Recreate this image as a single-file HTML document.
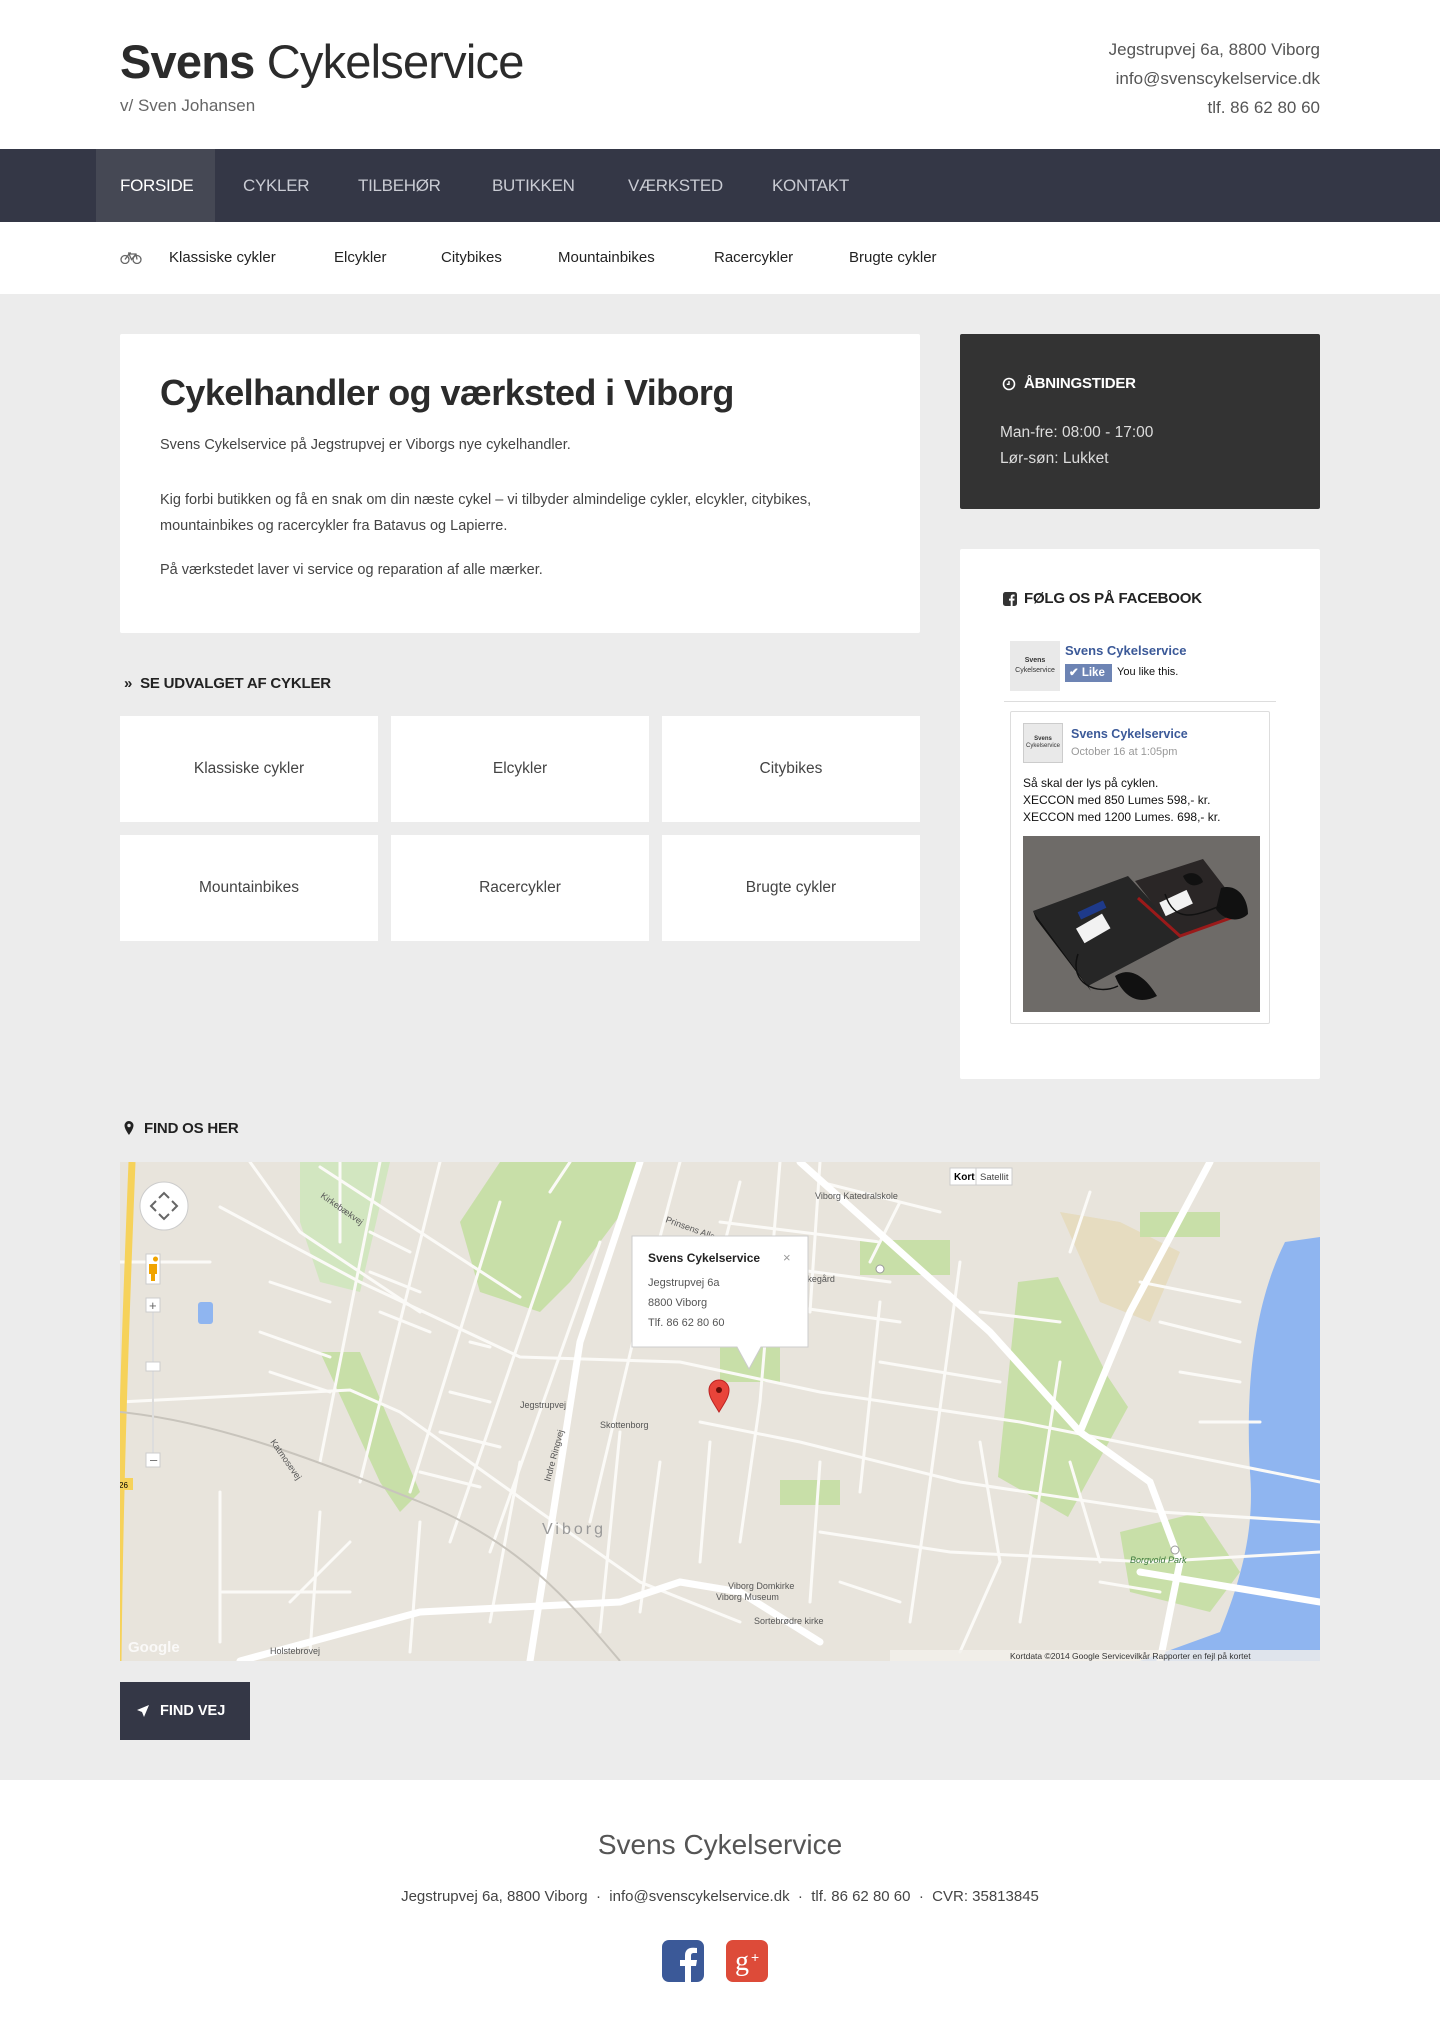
<!DOCTYPE html>
<html><head><meta charset="utf-8">
<style>
*{box-sizing:border-box;margin:0;padding:0}
body{width:1440px;height:2038px;background:#fff;font-family:"Liberation Sans",sans-serif;color:#333;position:relative;overflow:hidden}
.abs{position:absolute}
.nav{top:149px;left:0;width:1440px;height:73px;background:#343746}
.nav a{position:absolute;top:0;height:73px;line-height:73px;color:#c9cbd3;font-size:17px;letter-spacing:-0.3px}
.sub{top:222px;height:72px;width:1440px;background:#fff}
.sub span{position:absolute;top:27px;font-size:15px;color:#222}
.gray{top:294px;left:0;width:1440px;height:1486px;background:#ececec}
.card{background:#fff;border-radius:2px}
.tile{background:#fff;width:258px;height:106px;text-align:center;line-height:106px;font-size:15.5px;color:#444}
.h4{font-size:15px;font-weight:bold;color:#222;letter-spacing:-0.2px}
p.t{font-size:14.5px;color:#444;position:absolute;left:40px}
</style></head><body>

<div class="abs" style="left:120px;top:34px;font-size:47px;color:#2b2b2b;letter-spacing:-0.8px"><b>Svens</b> Cykelservice</div>
<div class="abs" style="left:120px;top:96px;font-size:17px;color:#666">v/ Sven Johansen</div>
<div class="abs" style="right:120px;top:35px;text-align:right;font-size:17px;color:#555;line-height:29px">Jegstrupvej 6a, 8800 Viborg<br>info@svenscykelservice.dk<br>tlf. 86 62 80 60</div>

<div class="abs nav">
<div class="abs" style="left:96px;top:0;width:119px;height:73px;background:#454854"></div>
<a style="left:120px;color:#fff">FORSIDE</a>
<a style="left:243px">CYKLER</a>
<a style="left:358px">TILBEHØR</a>
<a style="left:492px">BUTIKKEN</a>
<a style="left:628px">VÆRKSTED</a>
<a style="left:772px">KONTAKT</a>
</div>

<div class="abs sub">
<svg class="abs" style="left:120px;top:30px" width="22" height="12" viewBox="0 0 22 12"><g fill="none" stroke="#666" stroke-width="1.3"><circle cx="5" cy="7.5" r="4"/><circle cx="17" cy="7.5" r="4"/><path d="M5 7.5L9 2h7l1 5.5M9 2l2.5 5.5L16 2M8 1h3"/></g></svg>
<span style="left:169px">Klassiske cykler</span>
<span style="left:334px">Elcykler</span>
<span style="left:441px">Citybikes</span>
<span style="left:558px">Mountainbikes</span>
<span style="left:714px">Racercykler</span>
<span style="left:849px">Brugte cykler</span>
</div>

<div class="abs gray"></div>

<div class="abs card" style="left:120px;top:334px;width:800px;height:299px">
<div class="abs" style="left:40px;top:38px;font-size:36px;font-weight:bold;color:#2b2b2b;letter-spacing:-0.6px">Cykelhandler og værksted i Viborg</div>
<p class="t" style="top:103px">Svens Cykelservice på Jegstrupvej er Viborgs nye cykelhandler.</p>
<p class="t" style="top:153px;line-height:26px;width:740px">Kig forbi butikken og få en snak om din næste cykel – vi tilbyder almindelige cykler, elcykler, citybikes, mountainbikes og racercykler fra Batavus og Lapierre.</p>
<p class="t" style="top:228px">På værkstedet laver vi service og reparation af alle mærker.</p>
</div>

<div class="abs h4" style="left:124px;top:675px">»&nbsp; SE UDVALGET AF CYKLER</div>
<div class="abs tile" style="left:120px;top:716px">Klassiske cykler</div>
<div class="abs tile" style="left:391px;top:716px">Elcykler</div>
<div class="abs tile" style="left:662px;top:716px">Citybikes</div>
<div class="abs tile" style="left:120px;top:835px">Mountainbikes</div>
<div class="abs tile" style="left:391px;top:835px">Racercykler</div>
<div class="abs tile" style="left:662px;top:835px">Brugte cykler</div>

<div class="abs" style="left:960px;top:334px;width:360px;height:175px;background:#333;border-radius:2px">
<svg class="abs" style="left:42px;top:43px" width="14" height="14" viewBox="0 0 14 14"><circle cx="7" cy="7" r="5.5" fill="none" stroke="#fff" stroke-width="1.6"/><path d="M7 4v3.3H4.8" stroke="#fff" stroke-width="1.4" fill="none"/></svg>
<div class="abs h4" style="left:64px;top:41px;color:#fff">ÅBNINGSTIDER</div>
<div class="abs" style="left:40px;top:86px;font-size:15.5px;color:#ddd;line-height:26px">Man-fre: 08:00 - 17:00<br>Lør-søn: Lukket</div>
</div>

<div class="abs card" style="left:960px;top:549px;width:360px;height:530px">
<svg class="abs" style="left:43px;top:43px" width="14" height="14" viewBox="0 0 14 14"><rect width="14" height="14" rx="2.5" fill="#333"/><path d="M9.6 14V8.6h1.7l.3-2H9.6V5.4c0-.6.2-1 1-1h1V2.6c-.2 0-.8-.1-1.5-.1-1.5 0-2.4.9-2.4 2.5v1.6H6v2h1.7V14z" fill="#fff"/></svg>
<div class="abs h4" style="left:64px;top:41px">FØLG OS PÅ FACEBOOK</div>
<div class="abs" style="left:50px;top:92px;width:50px;height:50px;background:#e9e9e9;font-size:7px;text-align:center;padding-top:15px;line-height:10px;color:#333"><b>Svens</b><br>Cykelservice</div>
<div class="abs" style="left:105px;top:94px;font-size:13px;font-weight:bold;color:#3b5998">Svens Cykelservice</div>
<div class="abs" style="left:105px;top:115px;width:47px;height:18px;background:#6d84b4;color:#fff;font-size:11.5px;font-weight:bold;line-height:18px;padding-left:4px">✔ Like</div>
<div class="abs" style="left:157px;top:117px;font-size:11px;color:#111">You like this.</div>
<div class="abs" style="left:44px;top:152px;width:272px;height:1px;background:#ddd"></div>
<div class="abs" style="left:50px;top:162px;width:260px;height:313px;border:1px solid #ddd;border-radius:2px"></div>
<div class="abs" style="left:63px;top:174px;width:40px;height:40px;background:#e9e9e9;border:1px solid #ccc;font-size:6px;text-align:center;padding-top:12px;line-height:7px"><b>Svens</b><br>Cykelservice</div>
<div class="abs" style="left:111px;top:178px;font-size:12.5px;font-weight:bold;color:#3b5998">Svens Cykelservice</div>
<div class="abs" style="left:111px;top:197px;font-size:11px;color:#999">October 16 at 1:05pm</div>
<div class="abs" style="left:63px;top:226px;font-size:12px;color:#111;line-height:17px">Så skal der lys på cyklen.<br>XECCON med 850 Lumes 598,- kr.<br>XECCON med 1200 Lumes. 698,- kr.</div>
<svg class="abs" style="left:63px;top:287px" width="237" height="176" viewBox="0 0 237 176">
<rect width="237" height="176" fill="#6e6b68"/>
<path d="M10 75l95-35 55 60-95 50z" fill="#262626"/>
<path d="M10 75l3 8 55 72-3-5z" fill="#111"/>
<path d="M112 45l68-22 40 52-64 26z" fill="#2a2626"/>
<path d="M115 62l42 38 62-22" stroke="#9a1a1a" stroke-width="3" fill="none"/>
<rect x="55" y="84" width="30" height="17" fill="#f2f2f2" transform="rotate(-30 70 92)"/>
<rect x="138" y="60" width="30" height="15" fill="#f2f2f2" transform="rotate(-25 152 67)"/>
<path d="M92 140c15-10 30 0 42 20-15 8-32 5-42-20zM198 52c16-5 27 10 27 26-10 10-26 5-32-5zM160 40c8-6 18-2 20 6-8 6-16 4-20-6z" fill="#111"/>
<path d="M55 118c-10 30 20 42 40 32M142 58c10 30 30 22 55 12" stroke="#111" stroke-width="1.5" fill="none"/>
<rect x="55" y="70" width="28" height="8" fill="#1e3a8a" transform="rotate(-25 69 74)"/>
</svg>
</div>

<svg class="abs" style="left:124px;top:1121px" width="10" height="14" viewBox="0 0 10 14"><path d="M5 0a4.5 4.5 0 0 0-4.5 4.5C.5 8 5 14 5 14s4.5-6 4.5-9.5A4.5 4.5 0 0 0 5 0z" fill="#222"/><circle cx="5" cy="4.5" r="1.7" fill="#ececec"/></svg>
<div class="abs h4" style="left:144px;top:1120px">FIND OS HER</div>

<svg class="abs" style="left:120px;top:1162px" width="1200" height="499" viewBox="0 0 1200 499" font-family="Liberation Sans, sans-serif">
<rect width="1200" height="499" fill="#e8e4dc"/>
<path d="M380 0h140l-10 40-60 80-30 30-60-20-20-70z" fill="#c8dfa8"/>
<path d="M180 0h90l-30 130-40-10-20-60z" fill="#d2e6c0"/>
<path d="M898 120l40-5 50 100 20 30-60 110-70-40z" fill="#c8dfa8"/>
<path d="M940 50l60 10 60 30-30 70-50-20z" fill="#e6dcc0"/>
<path d="M740 78h90v35h-90zM1020 50h80v25h-80zM600 150h60v70h-60zM660 318h60v25h-60z" fill="#c8dfa8"/>
<path d="M1165 80c-30 60-40 140-35 230 5 60-10 110-30 160l-80 29h180V75z" fill="#8fb5f0"/>
<path d="M1000 370l80-20 40 60-30 40-80-20z" fill="#c8dfa8"/>
<path d="M200 190l60 130 20 30 20-20-60-140z" fill="#c8dfa8"/>
<rect x="78" y="140" width="15" height="22" rx="3" fill="#8fb5f0"/>
<g stroke="#fbfaf7" stroke-width="3" fill="none" stroke-linecap="round">
<path d="M0 240L230 228 280 250 420 350 520 420 620 460"/>
<path d="M100 45L240 120 400 195 560 200 700 230 900 260 1200 320"/>
<path d="M220 0v80M260 0L200 300M320 0L240 320M380 40L290 330M440 60L330 380M480 80L370 390M560 0L520 150 470 360M620 20L580 180M660 0L640 240 620 380M700 0L690 150M760 140L740 330M840 100L810 320 790 460M940 200L900 460"/>
<path d="M200 5l200 130M0 100h90M130 0L180 70 300 150"/>
<path d="M580 260l100 20 160 40 200 30 160 10"/>
<path d="M700 370l130 20 200 10 170 -10"/>
<path d="M150 120l60 20M140 170l70 25M150 210l60 20M250 70l40 20M250 110l50 20M260 150l50 20M330 230l40 10M320 270l60 15M300 310l60 15M350 180l20 5"/>
<path d="M600 60l160 20M620 100l150 20M640 140l140 20M590 280l-10 120M540 300l-20 150M700 300l-10 140M760 200l120 20M860 150l80 10M950 90l20 -60M1020 120l100 20M1040 160l80 20M1060 210l60 10M1080 260l60 0M980 420l60 10M430 30l20 -30M700 20l120 30M780 40l-30 60"/>
<path d="M500 270l-20 200M400 300l-30 160M300 360l-10 130M200 350l-10 140M100 330v150M100 430h130M230 380l-60 60"/>
<path d="M860 280l20 120M950 300l30 100M880 400l-40 90M720 420l60 20"/>
</g>
<g stroke="#fff" stroke-width="7" fill="none" stroke-linecap="round">
<path d="M520 0L460 180 410 499"/>
<path d="M680 0L870 170 960 270 1030 320 1060 400 1040 499"/>
<path d="M1090 0L1010 150 960 270"/>
<path d="M120 499L300 450 500 440 560 420 620 430 700 480"/>
<path d="M1020 410l180 30"/>
</g>
<path d="M12 0C8 100 0 300 -2 499" stroke="#f6d25a" stroke-width="7" fill="none"/>
<path d="M0 250C100 260 200 300 300 340S450 440 500 499" stroke="#c8c4bc" stroke-width="2" fill="none"/>
<g font-size="10" fill="#555">
<text x="422" y="372" font-size="16" fill="#999" letter-spacing="3">Viborg</text>
<text x="695" y="37" font-size="9">Viborg Katedralskole</text>
<text x="648" y="120" font-size="9">Viborg Kirkegård</text>
<text x="560" y="136" font-size="9">The Animation</text>
<text x="550" y="148" font-size="9">Workshop - VIA...</text>
<text x="608" y="427" font-size="9">Viborg Domkirke</text>
<text x="596" y="438" font-size="9">Viborg Museum</text>
<text x="634" y="462" font-size="9">Sortebrødre kirke</text>
<text x="1010" y="401" font-size="9" font-style="italic" fill="#3c7a3c">Borgvold Park</text>
<text x="400" y="246" font-size="9">Jegstrupvej</text>
<text x="150" y="492" font-size="9">Holstebrovej</text>
<text x="480" y="266" font-size="9">Skottenborg</text>
<text x="430" y="320" font-size="9" transform="rotate(-75 430 320)">Indre Ringvej</text>
<text x="150" y="280" font-size="9" transform="rotate(55 150 280)">Katmosevej</text>
<text x="200" y="35" font-size="9" transform="rotate(35 200 35)">Kirkebækvej</text>
<text x="545" y="60" font-size="9" transform="rotate(20 545 60)">Prinsens Alle</text>
</g>
<g fill="#fff" stroke="#999"><circle cx="760" cy="107" r="4"/><circle cx="592" cy="117" r="4"/><circle cx="1055" cy="388" r="4"/></g>
<text x="8" y="490" font-size="15" fill="#fff" font-weight="bold" opacity=".8">Google</text>
<rect x="830" y="6" width="62" height="17" fill="#fff" stroke="#ccc"/>
<line x1="856" y1="6" x2="856" y2="23" stroke="#ccc"/>
<text x="834" y="18" font-size="10" font-weight="bold" fill="#000">Kort</text>
<text x="860" y="18" font-size="9.5" fill="#444">Satellit</text>
<rect x="770" y="488" width="430" height="11" fill="#f2f0eb" opacity=".8"/>
<text x="890" y="497" font-size="8.5" fill="#333">Kortdata ©2014 Google   Servicevilkår   Rapporter en fejl på kortet</text>
<circle cx="44" cy="44" r="24" fill="#fff" stroke="#ccc"/>
<path d="M39 36l5-5 5 5M39 52l5 5 5-5M36 39l-5 5 5 5M52 39l5 5-5 5" stroke="#666" stroke-width="2" fill="none"/>
<rect x="26" y="92" width="14" height="30" fill="#fff" stroke="#ccc"/>
<path d="M33 97a2.5 2.5 0 1 1 0 .1M29 102h8v10h-2v7h-4v-7h-2z" fill="#f0a400"/>
<rect x="32" y="144" width="2" height="156" fill="#ddd"/>
<rect x="26" y="136" width="14" height="14" fill="#fff" stroke="#ccc"/><text x="29" y="148" font-size="13" fill="#666">+</text>
<rect x="26" y="200" width="14" height="9" fill="#fff" stroke="#ccc"/>
<rect x="26" y="291" width="14" height="14" fill="#fff" stroke="#ccc"/><text x="30" y="302" font-size="13" fill="#666">–</text>
<rect x="-3" y="316" width="16" height="12" fill="#f6d25a"/><text x="-1" y="326" font-size="8">26</text>
<path d="M512 74h176v111h-47l-12 22-12-22h-105z" fill="#fff" stroke="#ccc"/>
<text x="528" y="100" font-size="12" font-weight="bold" fill="#222">Svens Cykelservice</text>
<text x="663" y="100" font-size="13" fill="#999">×</text>
<text x="528" y="124" font-size="11" fill="#555">Jegstrupvej 6a</text>
<text x="528" y="144" font-size="11" fill="#555">8800 Viborg</text>
<text x="528" y="164" font-size="11" fill="#555">Tlf. 86 62 80 60</text>
<path d="M599 250c-6-10-10-15-10-22a10 10 0 0 1 20 0c0 7-4 12-10 22z" fill="#e8443a" stroke="#b22" stroke-width="1"/>
<circle cx="599" cy="228" r="3" fill="#6a0f0a"/>
</svg>

<div class="abs" style="left:120px;top:1682px;width:130px;height:58px;background:#343746;color:#fff;font-size:14.5px;font-weight:bold;line-height:58px">
<svg class="abs" style="left:17px;top:23px" width="12" height="12" viewBox="0 0 12 12"><path d="M12 0L0 5l5 2 2 5z" fill="#fff"/></svg>
<span class="abs" style="left:40px">FIND VEJ</span></div>

<div class="abs" style="left:0;top:1829px;width:1440px;text-align:center;font-size:28px;color:#555">Svens Cykelservice</div>
<div class="abs" style="left:0;top:1888px;width:1440px;text-align:center;font-size:15px;color:#444">Jegstrupvej 6a, 8800 Viborg &nbsp;·&nbsp; info@svenscykelservice.dk &nbsp;·&nbsp; tlf. 86 62 80 60 &nbsp;·&nbsp; CVR: 35813845</div>
<svg class="abs" style="left:662px;top:1940px" width="42" height="42" viewBox="0 0 42 42"><rect width="42" height="42" rx="7" fill="#3b5998"/><path d="M29 42V26h5l1-6h-6v-4c0-2 .6-3 3-3h3V8c-.6 0-2.5-.2-4.5-.2-4.5 0-7.5 2.7-7.5 7.7V20h-5v6h5v16z" fill="#fff"/></svg>
<svg class="abs" style="left:726px;top:1940px" width="42" height="42" viewBox="0 0 42 42"><rect width="42" height="42" rx="7" fill="#dd4b39"/><text x="9" y="30" font-family="Liberation Serif, serif" font-size="28" fill="#fff">g</text><text x="25" y="22" font-size="14" fill="#fff" font-family="Liberation Sans, sans-serif">+</text></svg>

</body></html>
